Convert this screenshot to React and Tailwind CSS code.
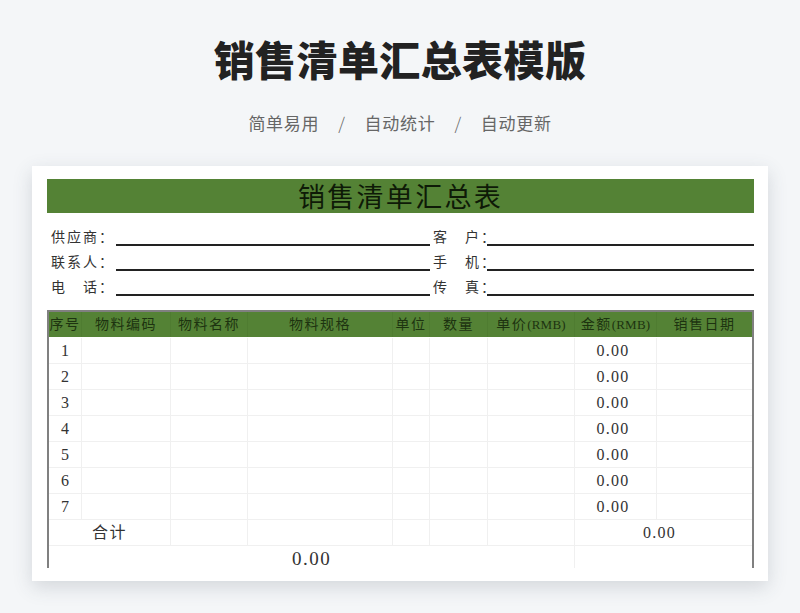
import React from "react";

const CJK = "font-['Liberation_Serif','Noto_Sans_CJK_SC',serif]";
const GRID = "grid grid-cols-[33px_89px_77px_145px_37px_58px_87px_82px_1fr]";
const headers = [
  ["序号"],
  ["物料编码"],
  ["物料名称"],
  ["物料规格"],
  ["单位"],
  ["数量"],
  ["单价", "(RMB)"],
  ["金额", "(RMB)"],
  ["销售日期"],
];
const rows = [1, 2, 3, 4, 5, 6, 7];
const fields = [
  ["供应商：", "客　户："],
  ["联系人：", "手　机："],
  ["电　话：", "传　真："],
];

function Cell({ children, className = "" }) {
  return (
    <div className={"flex h-[26px] items-center justify-center border-r border-b border-[#f0f0f0] text-[16px] text-[#333] " + className}>
      {children}
    </div>
  );
}

function App() {
  return (
    <div className="flex h-[613px] w-[800px] flex-col items-center overflow-hidden bg-[#f4f6f8] font-['Noto_Sans_CJK_SC',sans-serif]">
      <h1 className="mt-[38px] text-[41px] leading-[41px] font-black tracking-[0.4px] text-[#222]">销售清单汇总表模版</h1>
      <div className="mt-[35px] flex items-center gap-[19px] text-[17px] leading-[18px] tracking-[0.7px] text-[#666]">
        <span>简单易用</span>
        <span className="font-light">/</span>
        <span>自动统计</span>
        <span className="font-light">/</span>
        <span>自动更新</span>
      </div>

      <div className={"mt-[34px] h-[415px] w-[736px] bg-white pt-[13px] pr-[14px] pl-[15px] shadow-[0_6px_18px_rgba(60,70,90,0.18)] " + CJK}>
        <div className="flex h-[34px] items-center justify-center bg-[#548235] pt-[4px] text-[27px] tracking-[2.3px] text-[#0e1a07]">
          销售清单汇总表
        </div>

        <div className="mt-[15px] flex flex-col gap-[7px]">
          {fields.map((f) => (
            <div key={f[0]} className="grid h-[18px] grid-cols-[69px_314px_57px_267px] text-[14px] leading-[16px] tracking-[2px] text-[#333]">
              <span className="pt-[2px] pl-[4px] whitespace-nowrap">{f[0]}</span>
              <span className="border-b-2 border-[#222]"></span>
              <span className="pt-[2px] pl-[3px] whitespace-nowrap">{f[1]}</span>
              <span className="border-b-2 border-[#222]"></span>
            </div>
          ))}
        </div>

        <div className="mt-[14px] h-[258px] overflow-hidden border-x-2 border-t-2 border-[#808080]">
          <div className={GRID + " bg-[#548235]"}>
            {headers.map((h) => (
              <div key={h[0]} className="flex h-[25px] items-center justify-center border-r border-[#4f7c31] text-[14px] tracking-[1.5px] whitespace-nowrap text-[#1d3310] last:border-r-0">
                {h[0]}
                {h[1] && <span className="text-[13px] tracking-[0.2px]">{h[1]}</span>}
              </div>
            ))}
          </div>

          <div className="pt-[1px]">
            {rows.map((n) => (
              <div key={n} className={GRID}>
                <Cell>{n}</Cell>
                <Cell />
                <Cell />
                <Cell />
                <Cell />
                <Cell />
                <Cell />
                <Cell className="pr-[5px] tracking-[1.2px]">0.00</Cell>
                <Cell className="border-r-0" />
              </div>
            ))}

            <div className={GRID}>
              <Cell className="col-span-2 text-[14px] tracking-[1.5px]">合计</Cell>
              <Cell />
              <Cell />
              <Cell />
              <Cell />
              <Cell />
              <Cell className="col-span-2 border-r-0 pr-[8px] tracking-[1.2px]">0.00</Cell>
            </div>

            <div className={GRID}>
              <Cell className="col-span-7 pt-[1px] text-[19px] tracking-[1.5px]">0.00</Cell>
              <Cell className="col-span-2 border-r-0" />
            </div>
          </div>
        </div>
      </div>
    </div>
  );
}

export default App;
